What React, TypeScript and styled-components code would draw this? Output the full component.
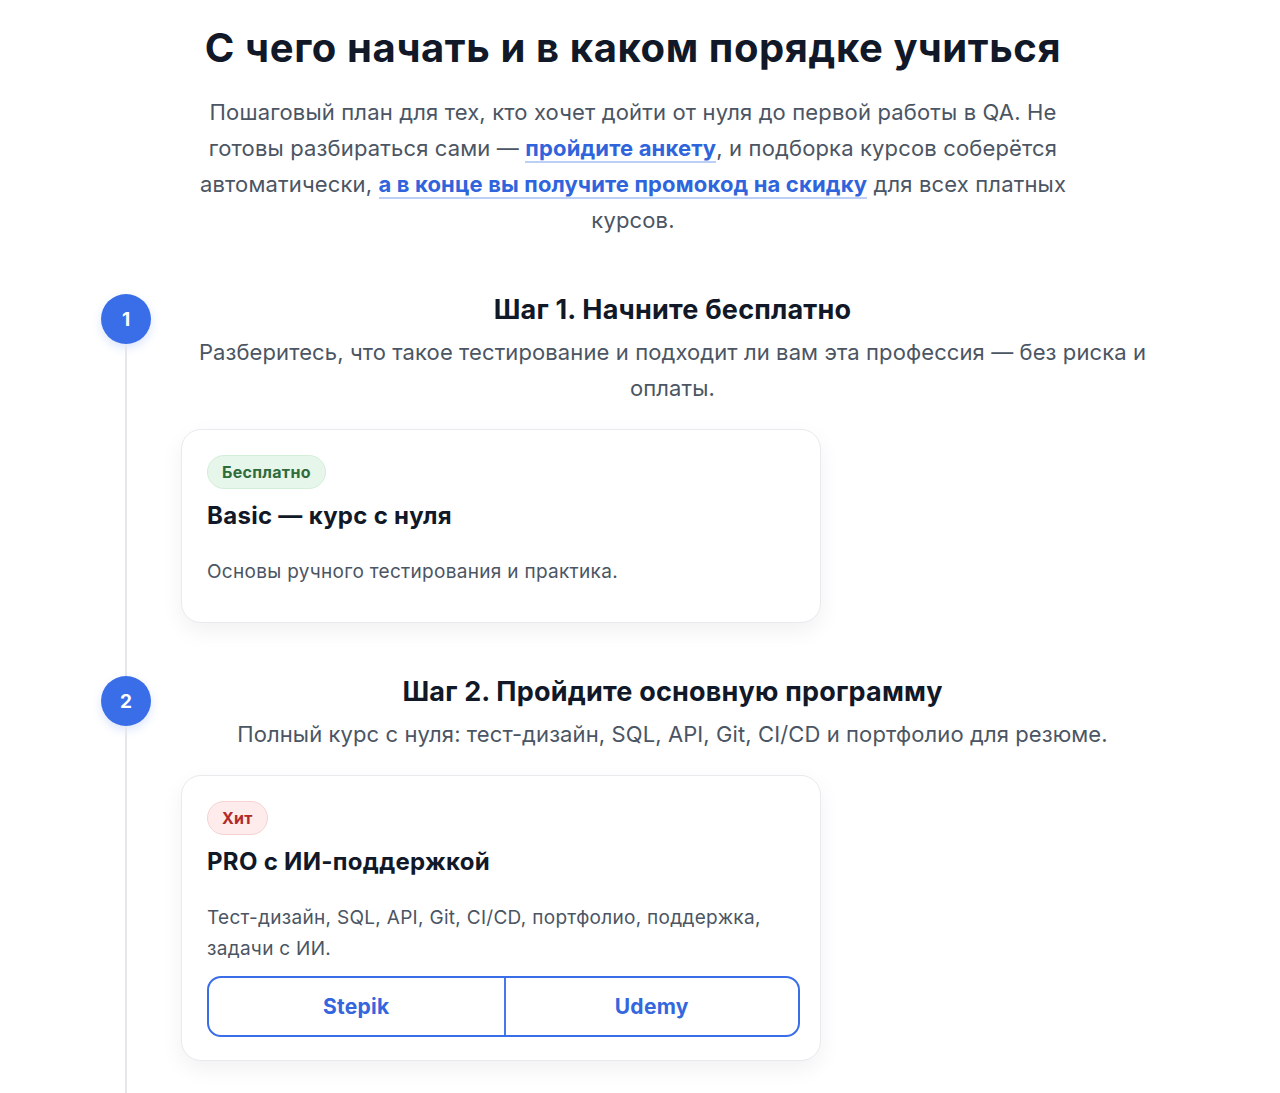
import React, { FunctionComponent } from 'react';
import styled, { createGlobalStyle } from 'styled-components';

const GlobalStyle = createGlobalStyle`
  html, body {
    margin: 0;
    padding: 0;
    background: #ffffff;
    font-family: Inter, 'Noto Sans', sans-serif;
    color: #111827;
  }
  * {
    box-sizing: border-box;
  }
`;

const Page = styled.main`
  width: 1078px;
  margin: 0 auto;
  padding: 24px 14px 0 0;
`;

const Intro = styled.header`
  display: flex;
  flex-direction: column;
  align-items: center;
  text-align: center;
  margin-bottom: 56px;
`;

const Title = styled.h1`
  margin: 0 0 22px;
  font-size: 40px;
  line-height: 48px;
  font-weight: 700;
  letter-spacing: 0.6px;
  color: #111827;
`;

const Lead = styled.p`
  margin: 0;
  max-width: 890px;
  font-size: 22px;
  line-height: 36px;
  letter-spacing: 0.15px;
  color: #4b5563;
`;

const Link = styled.a`
  color: #2f64dc;
  font-weight: 700;
  text-decoration: none;
  border-bottom: 2px solid #bcd0f7;
`;

const Timeline = styled.ol`
  list-style: none;
  margin: 0;
  padding: 0;
`;

const Step = styled.li`
  display: grid;
  grid-template-columns: 50px 1fr;
  column-gap: 29px;
`;

const Rail = styled.div`
  display: flex;
  flex-direction: column;
  align-items: center;
`;

const Dot = styled.div`
  width: 50px;
  height: 50px;
  border-radius: 50%;
  background: #3a6ee8;
  color: #ffffff;
  display: flex;
  align-items: center;
  justify-content: center;
  font-size: 19px;
  font-weight: 700;
  box-shadow: 0 4px 10px rgba(58, 110, 232, 0.18);
`;

const Line = styled.div`
  flex: 1;
  width: 2px;
  background: #e5e7eb;
`;

const StepBody = styled.div`
  display: flex;
  flex-direction: column;
  padding-bottom: 53px;
`;

const StepTitle = styled.h2`
  margin: -1px 0 7px;
  text-align: center;
  font-size: 27px;
  line-height: 34px;
  font-weight: 700;
  letter-spacing: 0.2px;
  color: #111827;
`;

const StepText = styled.p`
  margin: 0 0 23px;
  text-align: center;
  font-size: 22px;
  line-height: 36px;
  letter-spacing: 0.1px;
  color: #4b5563;
`;

const Card = styled.article`
  width: 640px;
  margin-left: 1px;
  padding: 25px 20px 23px 25px;
  border: 1px solid #e8eaee;
  border-radius: 20px;
  background: #ffffff;
  box-shadow: 0 8px 22px rgba(17, 24, 39, 0.06);
`;

const Badge = styled.span<{ $tone: 'green' | 'red' }>`
  display: inline-block;
  padding: 6px 14px;
  border-radius: 999px;
  font-size: 16px;
  line-height: 20px;
  font-weight: 700;
  letter-spacing: 0.3px;
  background: ${(p) => (p.$tone === 'green' ? '#e7f6ea' : '#fdeceb')};
  border: 1px solid ${(p) => (p.$tone === 'green' ? '#d3eed9' : '#f6d3d2')};
  color: ${(p) => (p.$tone === 'green' ? '#2f6b3b' : '#b02a2a')};
`;

const CardTitle = styled.h3`
  margin: 11px 0 0;
  font-size: 24px;
  line-height: 32px;
  font-weight: 700;
  letter-spacing: 0.3px;
  color: #111827;
`;

const CardText = styled.p`
  margin: 24px 0 12px;
  font-size: 19px;
  line-height: 31px;
  letter-spacing: 0.3px;
  color: #4b5563;
`;

const Buttons = styled.div`
  display: grid;
  grid-template-columns: 1fr 1fr;
  height: 61px;
  border: 2px solid #3a6ee8;
  border-radius: 14px;
  overflow: hidden;
`;

const ShopButton = styled.a`
  display: flex;
  align-items: center;
  justify-content: center;
  font-size: 21px;
  font-weight: 700;
  letter-spacing: 0.3px;
  color: #3466de;
  text-decoration: none;
  & + & {
    border-left: 2px solid #4a78e6;
  }
`;

interface IStep {
  num: number;
  title: string;
  text: string;
  badge: string;
  tone: 'green' | 'red';
  course: string;
  about: string;
  shops?: string[];
}

const steps: IStep[] = [
  {
    num: 1,
    title: 'Шаг 1. Начните бесплатно',
    text: 'Разберитесь, что такое тестирование и подходит ли вам эта профессия — без риска и оплаты.',
    badge: 'Бесплатно',
    tone: 'green',
    course: 'Basic — курс с нуля',
    about: 'Основы ручного тестирования и практика.',
  },
  {
    num: 2,
    title: 'Шаг 2. Пройдите основную программу',
    text: 'Полный курс с нуля: тест-дизайн, SQL, API, Git, CI/CD и портфолио для резюме.',
    badge: 'Хит',
    tone: 'red',
    course: 'PRO с ИИ-поддержкой',
    about: 'Тест-дизайн, SQL, API, Git, CI/CD, портфолио, поддержка, задачи с ИИ.',
    shops: ['Stepik', 'Udemy'],
  },
];

const App: FunctionComponent = () => {
  return (
    <>
      <GlobalStyle />
      <Page>
        <Intro>
          <Title>С чего начать и в каком порядке учиться</Title>
          <Lead>
            Пошаговый план для тех, кто хочет дойти от нуля до первой работы в QA. Не
            готовы разбираться сами — <Link href="#">пройдите анкету</Link>, и подборка
            курсов соберётся автоматически,{' '}
            <Link href="#">а в конце вы получите промокод на скидку</Link> для всех
            платных курсов.
          </Lead>
        </Intro>

        <Timeline>
          {steps.map((step) => (
            <Step key={step.num}>
              <Rail>
                <Dot>{step.num}</Dot>
                <Line />
              </Rail>
              <StepBody>
                <StepTitle>{step.title}</StepTitle>
                <StepText>{step.text}</StepText>
                <Card>
                  <Badge $tone={step.tone}>{step.badge}</Badge>
                  <CardTitle>{step.course}</CardTitle>
                  <CardText>{step.about}</CardText>
                  {step.shops && (
                    <Buttons>
                      {step.shops.map((shop) => (
                        <ShopButton key={shop} href="#">
                          {shop}
                        </ShopButton>
                      ))}
                    </Buttons>
                  )}
                </Card>
              </StepBody>
            </Step>
          ))}
        </Timeline>
      </Page>
    </>
  );
};

export default App;
